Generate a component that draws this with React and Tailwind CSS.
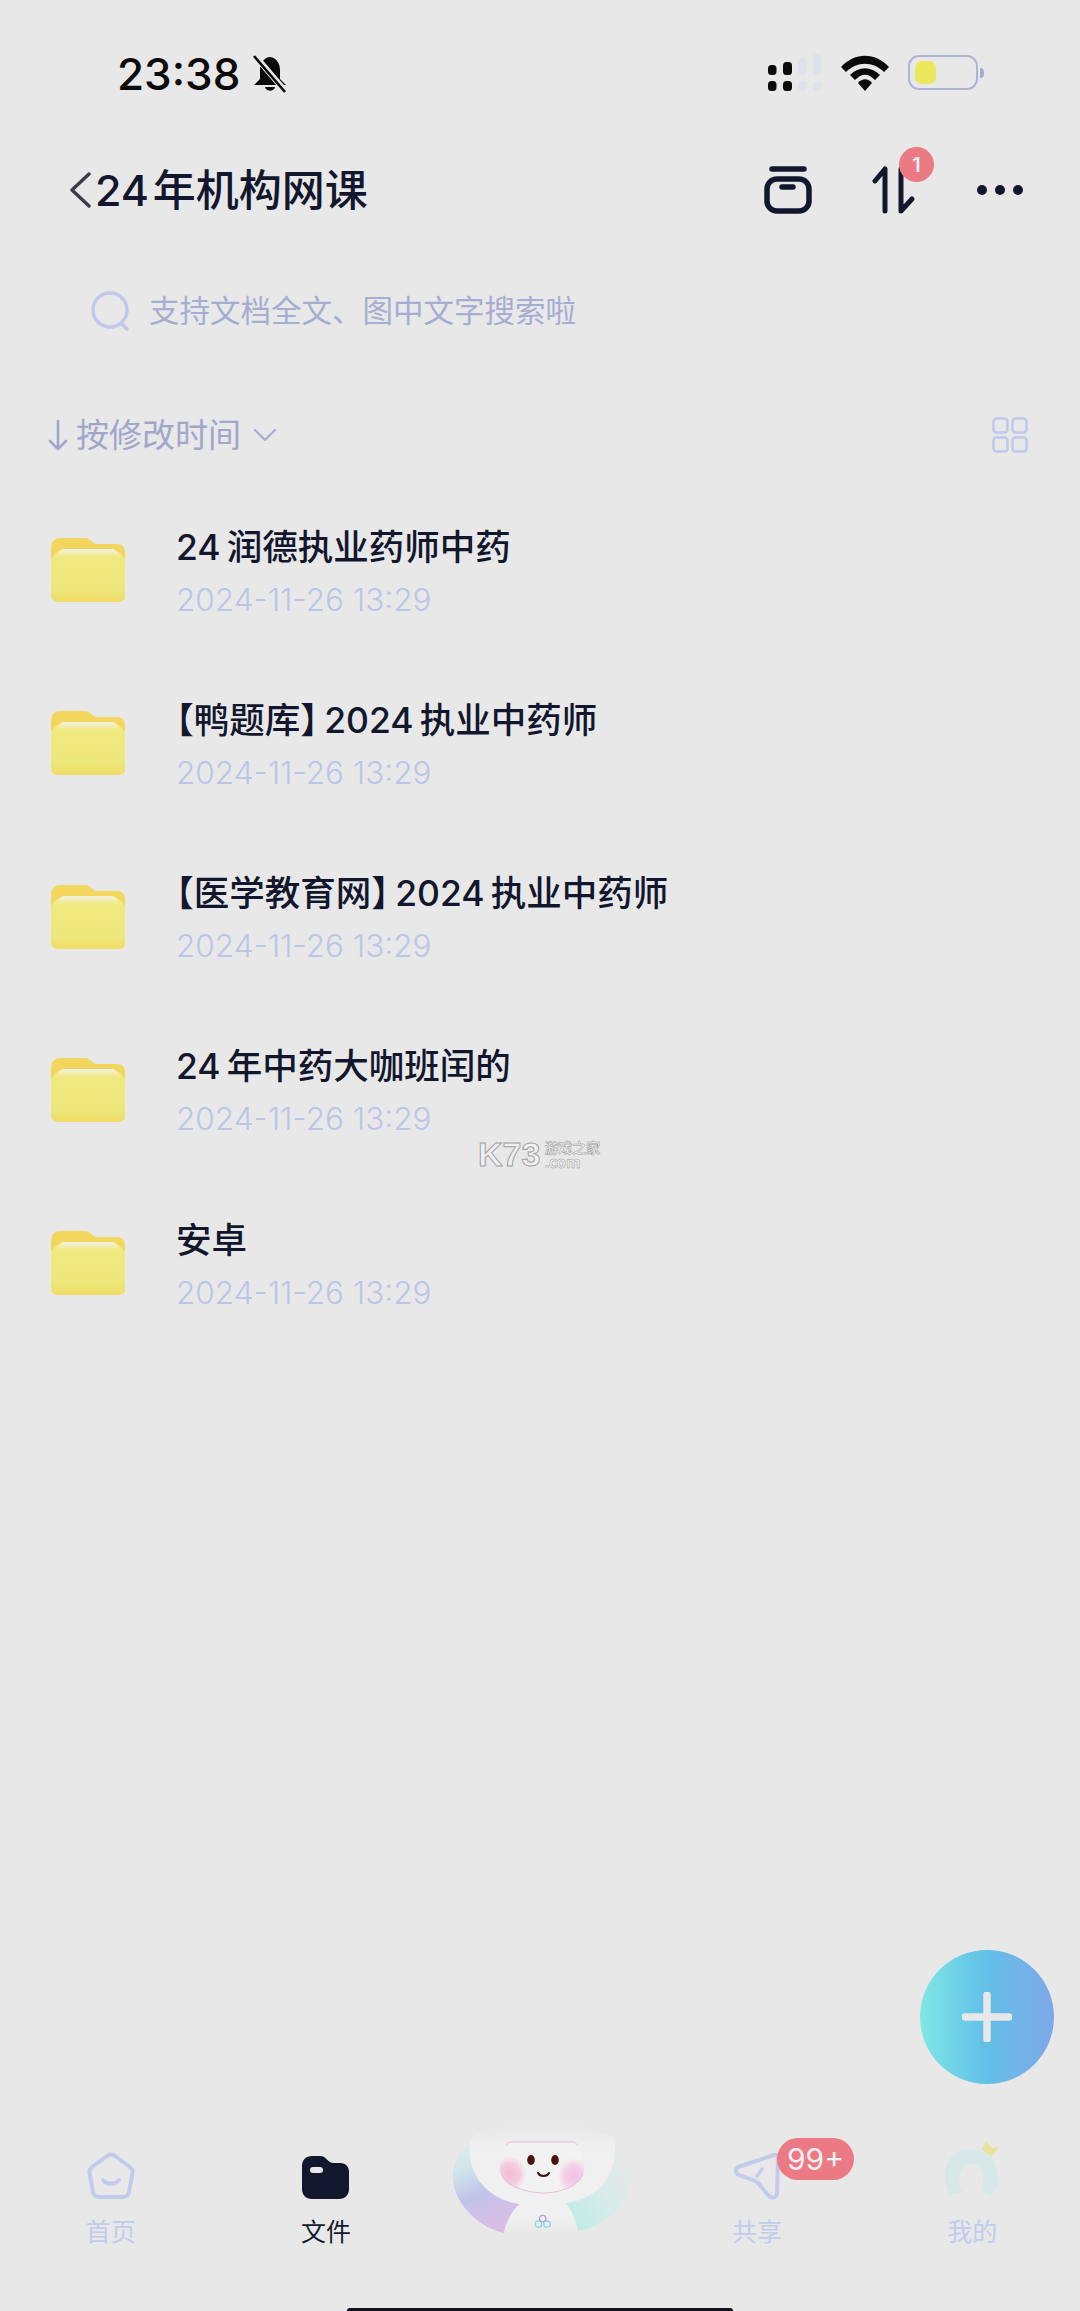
import React from "react";

const rows = [
  "24\u2009润德执业药师中药",
  "【鸭题库】\u20092024\u2009执业中药师",
  "【医学教育网】\u20092024\u2009执业中药师",
  "24\u2009年中药大咖班闰的",
  "安卓",
];

function Folder() {
  return (
    <svg width="74" height="66" viewBox="0 0 74 66" className="shrink-0">
      <defs>
        <linearGradient id="fb" x1="0" y1="0" x2="0" y2="1">
          <stop offset="0" stopColor="#f1ec9c" />
          <stop offset="0.2" stopColor="#f0e980" />
          <stop offset="0.8" stopColor="#ede678" />
          <stop offset="1" stopColor="#f2dc66" />
        </linearGradient>
        <linearGradient id="fs" x1="0" y1="0" x2="0" y2="1">
          <stop offset="0" stopColor="#f3f0e6" />
          <stop offset="1" stopColor="#f1ec9c" />
        </linearGradient>
      </defs>
      <path d="M0 12C0 5 3 1 9 1H34C39 1 41 6 45 7H66C71 7 74 10 74 15V58C74 63 71 65 66 65H8C3 65 0 62 0 58Z" fill="#f3d65e" />
      <path d="M0 22C2 20 4 16 7 15C9 13 11 12 14 12H60C63 12 65 13 67 15C70 16 72 20 74 22V58C74 63 71 65 66 65H8C3 65 0 62 0 58Z" fill="url(#fb)" />
      <path d="M7 18C8 14 11 12 14 12H60C63 12 66 14 67 18Z" fill="url(#fs)" />
    </svg>
  );
}

function Mascot() {
  return (
    <svg width="220" height="150" viewBox="0 0 220 150">
      <defs>
        <linearGradient id="wl" x1="0.3" y1="0" x2="0.6" y2="1">
          <stop offset="0" stopColor="#dcecec" />
          <stop offset="0.25" stopColor="#cfe4ea" />
          <stop offset="0.55" stopColor="#c2c4ea" />
          <stop offset="1" stopColor="#dcbce6" />
        </linearGradient>
        <linearGradient id="wr" x1="0.9" y1="0.1" x2="0.1" y2="0.9">
          <stop offset="0" stopColor="#e8e8e8" />
          <stop offset="0.5" stopColor="#d8ecea" />
          <stop offset="1" stopColor="#bfeae6" />
        </linearGradient>
        <linearGradient id="bd" x1="0" y1="0" x2="0" y2="1">
          <stop offset="0" stopColor="#e8e8e8" />
          <stop offset="0.2" stopColor="#f0f0f0" />
          <stop offset="0.85" stopColor="#f0f0f0" />
          <stop offset="1" stopColor="#e8e8e8" />
        </linearGradient>
        <radialGradient id="ck1">
          <stop offset="0" stopColor="#f4bcd0" />
          <stop offset="0.6" stopColor="#f4c4d8" stopOpacity="0.8" />
          <stop offset="1" stopColor="#f4d0e0" stopOpacity="0" />
        </radialGradient>
        <radialGradient id="ck2">
          <stop offset="0" stopColor="#f4c0e4" />
          <stop offset="0.6" stopColor="#f4c8e6" stopOpacity="0.8" />
          <stop offset="1" stopColor="#f4d4ec" stopOpacity="0" />
        </radialGradient>
        <clipPath id="fc">
          <path d="M78 32C74 38 72 44 71 50C67 62 72 72 85 78C100 84 128 84 140 78C155 70 157 58 152 46C150 40 149 36 146 32Z" />
        </clipPath>
      </defs>
      <path d="M42 31C28 42 22 56 23 70C25 95 50 118 74 123C76 112 82 100 90 94C62 90 42 70 40 44Z" fill="url(#wl)" />
      <path d="M183 33C196 46 202 58 200 72C198 96 175 116 148 121C146 110 142 100 135 93C162 90 182 72 185 46Z" fill="url(#wr)" />
      <path d="M40 30C36 70 62 90 90 94C82 100 76 112 74 124H148C146 110 142 100 135 93C162 90 188 72 185 30C170 10 55 10 40 30Z" fill="url(#bd)" />
      <g clipPath="url(#fc)">
        <path d="M78 32C74 38 72 44 71 50C67 62 72 72 85 78C100 84 128 84 140 78C155 70 157 58 152 46C150 40 149 36 146 32Z" fill="#f2f2f2" />
        <ellipse cx="80" cy="64" rx="17" ry="18" fill="url(#ck1)" />
        <ellipse cx="144" cy="66" rx="17" ry="18" fill="url(#ck2)" />
      </g>
      <path d="M76 36C77 34 78 33 80 32H144C146 33 147 34 148 36" fill="none" stroke="#e8bcd8" strokeWidth="1" />
      <path d="M72 64C76 74 90 82 113 83C130 83 148 76 153 64" fill="none" stroke="#e4c0dc" strokeWidth="1" />
      <ellipse cx="101" cy="50" rx="3.8" ry="5" fill="#4a1414" />
      <ellipse cx="125" cy="50" rx="3.8" ry="5" fill="#4a1414" />
      <path d="M108 63C110 67 117 67 119 63" fill="none" stroke="#3c1010" strokeWidth="2" strokeLinecap="round" />
      <circle cx="108.500" cy="114" r="3.200" fill="none" stroke="#7cd8e8" strokeWidth="1.300" />
      <circle cx="117" cy="114" r="3.200" fill="none" stroke="#7cd8e8" strokeWidth="1.300" />
      <circle cx="112.700" cy="108.500" r="3.200" fill="none" stroke="#b49ce4" strokeWidth="1.300" />
    </svg>
  );
}

function Tab({ label, active, children }) {
  return (
    <div className="flex flex-col items-center">
      <div className="flex h-[64px] w-[70px] items-end justify-center">{children}</div>
      <span className={`mt-[18px] text-[25px] leading-[28px] ${active ? "text-[#12172e]" : "text-[#c3cbec]"}`}>{label}</span>
    </div>
  );
}

export default function App() {
  return (
    <div className="relative flex h-[2311px] w-[1080px] flex-col overflow-hidden bg-[#e8e8e8] font-['Inter','Noto_Sans_CJK_SC',sans-serif] text-[#12172e]">
      {/* status bar */}
      <div className="flex h-[143px] items-start justify-between pt-[50px] pl-[117px] pr-[102px]">
        <div className="flex items-center gap-[12px]">
          <span className="text-[44px] font-medium leading-[48px] text-[#0a0a0a]">23:38</span>
          <svg width="36" height="38" viewBox="0 0 36 38">
            <path d="M18 2C11 3 8 9 8 15V24L2 30H34L28 24V15C28 9 25 3 18 2Z" fill="#0a0a0a" />
            <path d="M13 32C14 37 22 37 23 32Z" fill="#0a0a0a" />
            <path d="M4 2L34 37" stroke="#e8e8e8" strokeWidth="6" />
            <path d="M2 1L33 37" stroke="#0a0a0a" strokeWidth="2.6" />
          </svg>
        </div>
        <div className="flex items-center gap-[19px] pt-[4px]">
          <svg width="54" height="37" viewBox="0 0 54 37">
            <rect x="0" y="11" width="8.500" height="10" rx="3.500" fill="#0a0a0a" />
            <rect x="15" y="8" width="9" height="13" rx="3.500" fill="#0a0a0a" />
            <rect x="0" y="27" width="8.500" height="10" rx="3.500" fill="#0a0a0a" />
            <rect x="15" y="27" width="9" height="10" rx="3.500" fill="#0a0a0a" />
            <rect x="30" y="4" width="8.500" height="17" rx="4" fill="#dfe2ea" />
            <rect x="45" y="0" width="8" height="21" rx="4" fill="#dfe2ea" />
            <rect x="30" y="27" width="8.500" height="10" rx="4" fill="#dfe2ea" />
            <rect x="45" y="27" width="8" height="10" rx="3" fill="#dfe2ea" />
          </svg>
          <svg width="48" height="36" viewBox="0 0 48 36">
            <path d="M0 12C14 -3 34 -3 48 12L43 17C32 6 16 6 5 17Z" fill="#0a0a0a" />
            <path d="M9 20C18 11 30 11 39 20L34 25C27 18 21 18 14 25Z" fill="#0a0a0a" />
            <path d="M17 28C21 23 27 23 31 28L24 36Z" fill="#0a0a0a" />
          </svg>
          <div className="relative flex h-[35px] w-[70px] items-center rounded-[11px] border-2 border-[#b0b4d4] px-[5px]">
            <div className="h-[23px] w-[21px] rounded-[7px] bg-[#ece85e]" />
            <div className="absolute left-[70px] h-[10px] w-[4px] rounded-r-[4px] bg-[#a8accc]" />
          </div>
        </div>
      </div>

      {/* header */}
      <div className="flex h-[92px] translate-y-[1px] items-center justify-between pl-[70px] pr-[56px]">
        <div className="flex items-center">
          <svg width="24" height="36" viewBox="0 0 24 36" className="mr-[1px]">
            <path d="M19 2L2 18L19 34" fill="none" stroke="#3a3c48" strokeWidth="3.4" strokeLinecap="round" strokeLinejoin="round" />
          </svg>
          <span className="text-[43px] font-medium leading-[56px]">24{"\u200a"}年机构网课</span>
        </div>
        <div className="flex items-center">
          <svg width="48" height="48" viewBox="0 0 48 48">
            <path d="M8 3H40" stroke="#12172e" strokeWidth="5.5" strokeLinecap="round" />
            <rect x="3" y="13" width="42" height="32" rx="10" fill="none" stroke="#12172e" strokeWidth="5.5" />
            <path d="M18 21H29" stroke="#12172e" strokeWidth="5.5" strokeLinecap="round" />
          </svg>
          <div className="relative ml-[60px]">
            <svg width="44" height="48" viewBox="0 0 44 48" className="block">
              <path d="M3 15L13 3V45" fill="none" stroke="#12172e" strokeWidth="5" strokeLinecap="round" strokeLinejoin="round" />
              <path d="M29 3V45L40 33" fill="none" stroke="#12172e" strokeWidth="5" strokeLinecap="round" strokeLinejoin="round" />
            </svg>
            <div className="absolute left-[27px] top-[-19px] flex h-[35px] w-[35px] items-center justify-center rounded-full bg-[#ec7a84] text-[20px] font-semibold leading-none text-[#f0eef0]">1</div>
          </div>
          <svg width="48" height="12" viewBox="0 0 48 12" className="ml-[60px]">
            <circle cx="6" cy="6" r="5" fill="#12172e" />
            <circle cx="24" cy="6" r="5" fill="#12172e" />
            <circle cx="42" cy="6" r="5" fill="#12172e" />
          </svg>
        </div>
      </div>

      {/* search */}
      <div className="mt-[54px] flex items-center pl-[89px]">
        <svg width="42" height="42" viewBox="0 0 42 42">
          <circle cx="21" cy="20" r="17" fill="none" stroke="#c0c8ec" strokeWidth="3.4" />
          <path d="M32 33L38 39" stroke="#c0c8ec" strokeWidth="3.4" strokeLinecap="round" />
        </svg>
        <span className="ml-[18px] text-[30.5px] leading-[44px] text-[#a6acd2]">支持文档全文、图中文字搜索啦</span>
      </div>

      {/* sort row */}
      <div className="mt-[80px] flex h-[44px] items-center justify-between pl-[48px] pr-[52px]">
        <div className="flex items-center text-[#a0a6cc]">
          <svg width="20" height="32" viewBox="0 0 20 32">
            <path d="M10 2V30M2 22L10 30L18 22" fill="none" stroke="#a0a6cc" strokeWidth="2.6" strokeLinecap="round" strokeLinejoin="round" />
          </svg>
          <span className="ml-[8px] text-[33px] leading-[44px]">按修改时间</span>
          <svg width="24" height="14" viewBox="0 0 24 14" className="ml-[12px]">
            <path d="M2 2L12 12L22 2" fill="none" stroke="#a8aed4" strokeWidth="2.4" strokeLinecap="round" strokeLinejoin="round" />
          </svg>
        </div>
        <svg width="36" height="36" viewBox="0 0 36 36">
          <rect x="1.5" y="1.5" width="14" height="14" rx="3" fill="none" stroke="#c0c8ec" strokeWidth="2.6" />
          <rect x="20.5" y="1.5" width="14" height="14" rx="3" fill="none" stroke="#c0c8ec" strokeWidth="2.6" />
          <rect x="1.5" y="20.5" width="14" height="14" rx="3" fill="none" stroke="#c0c8ec" strokeWidth="2.6" />
          <rect x="20.5" y="20.5" width="14" height="14" rx="3" fill="none" stroke="#c0c8ec" strokeWidth="2.6" />
        </svg>
      </div>

      {/* list */}
      <div className="mt-[49px] flex flex-col gap-[45.25px] pl-[51px]">
        {rows.map((t) => (
          <div key={t} className="flex h-[128px] items-center">
            <Folder />
            <div className="ml-[51px] flex flex-col">
              <span className="text-[35.5px] font-medium leading-[50px] [font-feature-settings:'halt']">{t}</span>
              <span className="mt-[9px] text-[31.5px] font-light leading-[36px] text-[#bcc4e8]">2024-11-26 13:29</span>
            </div>
          </div>
        ))}
      </div>

      {/* tab bar */}
      <div className="mt-auto mb-[65px] grid grid-cols-5 pl-[3px]">
        <Tab label="首页">
          <svg width="48" height="48" viewBox="0 0 48 48">
            <path d="M20 4C22 2 26 2 28 4L43 15C45 17 46 19 45.500 21L42 40C41.500 43 39 45 36 45H12C9 45 6.500 43 6 40L2.500 21C2 19 3 17 5 15Z" fill="none" stroke="#c3cbec" strokeWidth="4" strokeLinejoin="round" />
            <path d="M16 28C20 33 28 33 32 28" fill="none" stroke="#c3cbec" strokeWidth="4" strokeLinecap="round" />
          </svg>
        </Tab>
        <Tab label="文件" active>
          <svg width="48" height="44" viewBox="0 0 48 44">
            <path d="M0 10C0 4 4 0 10 0H18C25 0 25 7 32 7H38C44 7 47 11 47 16V33C47 39 43 43 37 43H10C4 43 0 39 0 33Z" fill="#12172e" />
            <rect x="8" y="11" width="13" height="6" rx="3" fill="#e8e8e8" />
          </svg>
        </Tab>
        <div />
        <Tab label="共享">
          <svg width="48" height="48" viewBox="0 0 48 48">
            <path d="M41 3C43 2 45 4 45 6L44 41C44 46 38 47 35 43L25 31C24 30 23 29 22 29L6 23C2 21 2 17 5 15Z" fill="none" stroke="#c3cbec" strokeWidth="4" strokeLinejoin="round" />
            <path d="M24 24L29 17" stroke="#c3cbec" strokeWidth="3.4" strokeLinecap="round" />
          </svg>
        </Tab>
        <Tab label="我的">
          <svg width="56" height="58" viewBox="0 0 56 58" className="mb-[2px]">
            <path d="M6 55C0 45 0 35 2 28C5 15 15 9 27 9C40 9 50 15 53 30C55 40 53 48 48 55L37 52C40 45 40 38 38 33C35 26 32 24 27 24C22 24 19 27 17 32C14 40 15 47 18 52Z" fill="#d6e8e8" />
            <path d="M31 6L38 9L42 1L48 8L55 7L48 17C44 13 38 10 31 6Z" fill="#e8e2a0" />
          </svg>
        </Tab>
      </div>

      {/* overlays */}
      <div className="absolute left-[430px] top-[2110px]"><Mascot /></div>

      <div className="absolute left-[777px] top-[2138px] flex h-[42px] w-[77px] items-center justify-center rounded-full bg-[#ec7a84] text-[30px] leading-none text-[#f2f0f2]">99+</div>

      <div className="absolute left-[920px] top-[1950px] flex h-[134px] w-[134px] items-center justify-center rounded-full bg-gradient-to-r from-[#7fe8e4] via-[#62bfe8] to-[#7ea8e8]">
        <svg width="50" height="50" viewBox="0 0 50 50">
          <path d="M25 3V47M3 25H47" stroke="#e8e8e8" strokeWidth="7.5" strokeLinecap="round" />
        </svg>
      </div>

      <div className="absolute left-[478px] top-[1138px] flex items-center gap-[4px] font-['Liberation_Sans',sans-serif] text-[#f0f0f0]">
        <span className="text-[34px] font-bold leading-[32px] [-webkit-text-stroke:1px_#a0a0a0]">K73</span>
        <div className="flex flex-col font-['Noto_Sans_CJK_SC',sans-serif] [-webkit-text-stroke:0.5px_#9a9a9a]">
          <span className="text-[14px] font-bold leading-[15px]">游戏之家</span>
          <span className="text-[15px] font-bold leading-[13px]">.com</span>
        </div>
      </div>

      <div className="absolute bottom-0 left-[347px] h-[3px] w-[386px] rounded-t-full bg-[#12131c]" />
    </div>
  );
}
